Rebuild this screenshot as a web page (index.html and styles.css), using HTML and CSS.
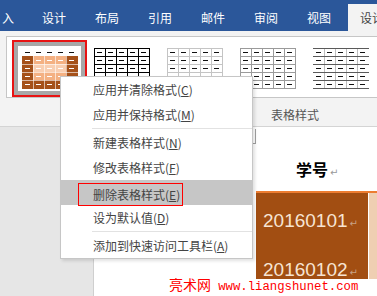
FILE: index.html
```html
<!DOCTYPE html>
<html lang="zh-CN">
<head>
    <meta charset="UTF-8">
    <meta name="viewport" content="width=device-width, initial-scale=1.0">
    <title>表格样式</title>
    <link rel="stylesheet" href="styles.css">
</head>
<body>
    <div class="tabs">
        <div class="tab first">入</div>
        <div class="tab">设计</div>
        <div class="tab">布局</div>
        <div class="tab">引用</div>
        <div class="tab">邮件</div>
        <div class="tab">审阅</div>
        <div class="tab">视图</div>
        <div class="tab active">设计</div>
    </div>

    <div class="ribbon">
        <div class="gallery">
            <!-- orange grid style (selected) -->
            <div class="thumb selected">
                <svg width="56" height="41" viewBox="0 0 56 41">
                    <rect y="8" width="56" height="33" fill="#f4b183"/>
                    <rect y="16" width="56" height="8" fill="#f9cfb2"/>
                    <rect y="8" width="11" height="33" fill="#a5511a"/>
                    <rect x="44" y="8" width="12" height="33" fill="#a5511a"/>
                    <rect y="32" width="56" height="9" fill="#a5511a"/>
                    <path d="M11.5 8v33M22.5 8v33M33.5 8v33M44.5 8v33M0 16.5h56M0 24.5h56M0 32.5h56" stroke="#fff" stroke-opacity=".6"/>
                    <path d="M3 4.5h5m6 0h5m6 0h5m6 0h5m6 0h5" stroke="#111"/>
                    <path d="M3 12.5h5m6 0h5m6 0h5m6 0h5m6 0h5M3 20.5h5m6 0h5m6 0h5m6 0h5m6 0h5M3 28.5h5m6 0h5m6 0h5m6 0h5m6 0h5M3 36.5h5m6 0h5m6 0h5m6 0h5m6 0h5" stroke="#fff"/>
                </svg>
            </div>
            <!-- black grid -->
            <div class="thumb">
                <svg width="56" height="41" viewBox="0 0 56 41">
                    <path d="M.5 0v41M11.5 0v41M22.5 0v41M33.5 0v41M44.5 0v41M55.5 0v41M0 .5h56M0 8.5h56M0 16.5h56M0 24.5h56M0 32.5h56M0 40.5h56" stroke="#000"/>
                    <path d="M3 4.5h5m6 0h5m6 0h5m6 0h5m6 0h5M3 12.5h5m6 0h5m6 0h5m6 0h5m6 0h5M3 20.5h5m6 0h5m6 0h5m6 0h5m6 0h5M3 28.5h5m6 0h5m6 0h5m6 0h5m6 0h5M3 36.5h5m6 0h5m6 0h5m6 0h5m6 0h5" stroke="#000"/>
                </svg>
            </div>
            <!-- light grid -->
            <div class="thumb">
                <svg width="56" height="41" viewBox="0 0 56 41">
                    <path d="M.5 0v41M11.5 0v41M22.5 0v41M33.5 0v41M44.5 0v41M55.5 0v41M0 .5h56M0 8.5h56M0 16.5h56M0 24.5h56M0 32.5h56M0 40.5h56" stroke="#c4c4c4"/>
                    <path d="M3 4.5h5m6 0h5m6 0h5m6 0h5m6 0h5M3 12.5h5m6 0h5m6 0h5m6 0h5m6 0h5M3 20.5h5m6 0h5m6 0h5m6 0h5m6 0h5M3 28.5h5m6 0h5m6 0h5m6 0h5m6 0h5M3 36.5h5m6 0h5m6 0h5m6 0h5m6 0h5" stroke="#111"/>
                </svg>
            </div>
            <!-- gray grid -->
            <div class="thumb">
                <svg width="56" height="41" viewBox="0 0 56 41">
                    <path d="M.5 0v41M11.5 0v41M22.5 0v41M33.5 0v41M44.5 0v41M55.5 0v41M0 .5h56M0 8.5h56M0 16.5h56M0 24.5h56M0 32.5h56M0 40.5h56" stroke="#9a9a9a"/>
                    <path d="M3 4.5h5m6 0h5m6 0h5m6 0h5m6 0h5M3 12.5h5m6 0h5m6 0h5m6 0h5m6 0h5M3 20.5h5m6 0h5m6 0h5m6 0h5m6 0h5M3 28.5h5m6 0h5m6 0h5m6 0h5m6 0h5M3 36.5h5m6 0h5m6 0h5m6 0h5m6 0h5" stroke="#111"/>
                </svg>
            </div>
            <!-- horizontal lines -->
            <div class="thumb">
                <svg width="56" height="41" viewBox="0 0 56 41">
                    <path d="M11.5 0v41M22.5 0v41M33.5 0v41M44.5 0v41" stroke="#bdbdbd"/>
                    <path d="M0 .5h56M0 8.5h56M0 16.5h56M0 24.5h56M0 32.5h56M0 40.5h56" stroke="#5a5a5a"/>
                    <path d="M3 4.5h5m6 0h5m6 0h5m6 0h5m6 0h5M3 12.5h5m6 0h5m6 0h5m6 0h5m6 0h5M3 20.5h5m6 0h5m6 0h5m6 0h5m6 0h5M3 28.5h5m6 0h5m6 0h5m6 0h5m6 0h5M3 36.5h5m6 0h5m6 0h5m6 0h5m6 0h5" stroke="#111"/>
                </svg>
            </div>
        </div>
        <div class="group-label">表格样式</div>
    </div>

    <div class="workspace">
        <div class="side"></div>
        <div class="page">
            <div class="doc-table">
                <div class="cell head">学号<span class="pmark">↵</span></div>
                <div class="cell head side-col"></div>
                <div class="cell dark">20160101<span class="pmark">↵</span></div>
                <div class="cell light"></div>
                <div class="cell dark">20160102<span class="pmark">↵</span></div>
                <div class="cell light"></div>
            </div>
        </div>
    </div>

    <ul class="menu">
        <li>应用并清除格式(<u>C</u>)</li>
        <li>应用并保持格式(<u>M</u>)</li>
        <li class="sep"></li>
        <li>新建表格样式(<u>N</u>)</li>
        <li>修改表格样式(<u>F</u>)</li>
        <li class="hover"><span class="mark-box">删除表格样式(<u>E</u>)</span></li>
        <li>设为默认值(<u>D</u>)</li>
        <li class="sep"></li>
        <li>添加到快速访问工具栏(<u>A</u>)</li>
    </ul>

    <div class="watermark">亮术网 <span class="url">www.liangshunet.com</span></div>
</body>
</html>
```

FILE: styles.css
```css
body {
    margin: 0;
    width: 377px;
    height: 296px;
    overflow: hidden;
    position: relative;
    font-family: "Noto Sans CJK SC", sans-serif;
    font-size: 12px;
    background: #e6e6e6;
}

/* tab bar */
.tabs {
    display: flex;
    height: 31px;
    box-sizing: border-box;
    padding-top: 4px;
    background: #2b579a;
}

.tab {
    flex: none;
    width: 53px;
    box-sizing: border-box;
    padding-left: 12px;
    line-height: 27px;
    color: #ffffff;
    white-space: nowrap;
}

.tab.first {
    width: 30px;
    padding-left: 2px;
}

.tab.active {
    background: #f3f3f3;
    color: #444;
}

/* ribbon */
.ribbon {
    height: 96px;
    box-sizing: border-box;
    padding-top: 5px;
    background: #f3f3f3;
    border-bottom: 1px solid #d4d4d4;
}

.gallery {
    display: flex;
    height: 62px;
    box-sizing: border-box;
    margin-left: 6px;
    padding: 3px 0 0 5px;
    background: #ffffff;
    border: 1px solid #c6c6c6;
    border-right: none;
}

.thumb {
    flex: none;
    width: 73px;
    height: 57px;
    box-sizing: border-box;
    display: flex;
    align-items: center;
    justify-content: center;
}

.thumb svg {
    display: block;
}

.thumb.selected {
    width: 75px;
    margin-right: -2px;
    border: 2px solid #e81414;
    box-shadow: inset 0 0 0 4px #a8a8a8;
}

.group-label {
    padding: 8px 0 0 271px;
    line-height: 18px;
    color: #555;
}

/* document */
.workspace {
    display: flex;
    height: 169px;
}

.side {
    flex: none;
    width: 93px;
}

.page {
    flex: 1;
    position: relative;
    background: #ffffff;
    border-left: 1px solid #cfcfcf;
    padding: 17px 0 0 162px;
}

.page::before {
    content: "";
    position: absolute;
    left: 147px;
    top: 2px;
    width: 14px;
    height: 14px;
    border-right: 1px solid #a0a0a0;
    border-bottom: 1px solid #a0a0a0;
}

.doc-table {
    display: grid;
    grid-template-columns: 112px 1fr;
}

.cell {
    height: 49px;
    box-sizing: border-box;
}

.cell.head {
    padding-top: 3px;
    line-height: 44px;
    text-align: center;
    font-size: 16px;
    font-weight: bold;
    color: #000;
    border-bottom: 2px solid #ed7d31;
}

.cell.dark {
    padding: 17px 0 0 7px;
    background: #a24e12;
    color: #f7e4d2;
    font-family: "Liberation Sans", sans-serif;
    font-size: 19px;
    line-height: 22px;
}

.cell.light {
    background: #efcfb2;
    border-left: 1px solid #ffffff;
}

.pmark {
    display: inline-block;
    width: 0;
    position: relative;
    left: 2px;
    font-family: "DejaVu Sans", sans-serif;
    font-size: 10px;
    font-weight: normal;
    color: #999;
}

.cell.dark .pmark {
    color: #c9a184;
}

/* context menu */
.menu {
    position: absolute;
    left: 60px;
    top: 76px;
    width: 193px;
    box-sizing: border-box;
    margin: 0;
    padding: 0;
    list-style: none;
    background: #ffffff;
    border: 1px solid #c6c6c6;
    box-shadow: 2px 2px 3px rgba(0, 0, 0, 0.12);
    color: #444;
}

.menu li {
    height: 25px;
    line-height: 25px;
    padding-left: 32px;
    white-space: nowrap;
}

.menu li.sep {
    height: 1px;
    margin: 1px 0 1px 31px;
    padding: 0;
    background: #e2e2e2;
}

.menu li.hover {
    background: #c6c6c6;
}

.mark-box {
    display: inline-block;
    margin-left: -15px;
    padding: 0 2px 0 14px;
    line-height: 21px;
    border: 1px solid #f00;
    vertical-align: middle;
}

/* watermark */
.watermark {
    position: absolute;
    left: 164px;
    right: 0;
    top: 279px;
    height: 17px;
    padding-left: 5px;
    background: #ffffff;
    color: #f00;
    font-size: 14px;
    line-height: 10px;
    white-space: nowrap;
}

.watermark .url {
    margin-left: 4px;
    font-family: "Liberation Mono", monospace;
    font-size: 12.3px;
}
```
